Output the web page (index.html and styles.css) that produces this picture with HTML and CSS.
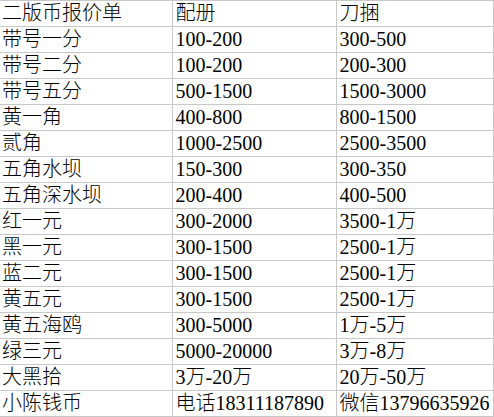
FILE: index.html
```html
<!DOCTYPE html>
<html lang="zh-CN">
<head>
<meta charset="utf-8">
<link rel="stylesheet" href="styles.css">
</head>
<body>
<table class="sheet">
  <colgroup>
    <col class="c1"><col class="c2"><col class="c3">
  </colgroup>
  <tbody>
    <tr><td>二版币报价单</td><td>配册</td><td>刀捆</td></tr>
    <tr><td>带号一分</td><td>100-200</td><td>300-500</td></tr>
    <tr><td>带号二分</td><td>100-200</td><td>200-300</td></tr>
    <tr><td>带号五分</td><td>500-1500</td><td>1500-3000</td></tr>
    <tr><td>黄一角</td><td>400-800</td><td>800-1500</td></tr>
    <tr><td>贰角</td><td>1000-2500</td><td>2500-3500</td></tr>
    <tr><td>五角水坝</td><td>150-300</td><td>300-350</td></tr>
    <tr><td>五角深水坝</td><td>200-400</td><td>400-500</td></tr>
    <tr><td>红一元</td><td>300-2000</td><td>3500-1万</td></tr>
    <tr><td>黑一元</td><td>300-1500</td><td>2500-1万</td></tr>
    <tr><td>蓝二元</td><td>300-1500</td><td>2500-1万</td></tr>
    <tr><td>黄五元</td><td>300-1500</td><td>2500-1万</td></tr>
    <tr><td>黄五海鸥</td><td>300-5000</td><td>1万-5万</td></tr>
    <tr><td>绿三元</td><td>5000-20000</td><td>3万-8万</td></tr>
    <tr><td>大黑拾</td><td>3万-20万</td><td>20万-50万</td></tr>
    <tr><td>小陈钱币</td><td>电话18311187890</td><td>微信13796635926</td></tr>
  </tbody>
</table>
</body>
</html>
```
FILE: styles.css
```css
html, body {
  margin: 0;
  padding: 0;
  background: #ffffff;
}
.sheet {
  border-collapse: collapse;
  table-layout: fixed;
  width: 493px;
  font-family: "Liberation Serif", "Noto Sans CJK SC", serif;
  font-size: 20px;
  font-weight: 300;
  color: #000000;
}
.c1 { width: 172px; }
.c2 { width: 164px; }
.c3 { width: 157px; }
.sheet td {
  border: 1px solid #c8c8c8;
  height: 25px;
  line-height: 25px;
  padding: 0 0 0 3px;
  white-space: nowrap;
  overflow: hidden;
  vertical-align: middle;
}
.sheet td:first-child {
  border-left: none;
  padding-left: 2px;
}
```
